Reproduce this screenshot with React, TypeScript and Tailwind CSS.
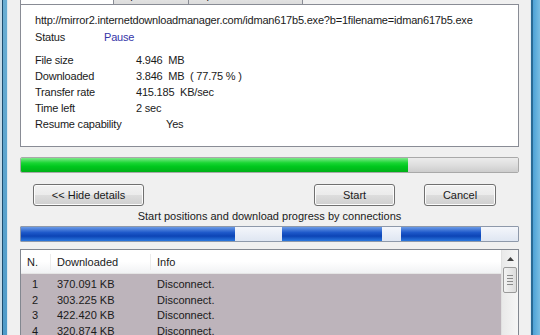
import React from 'react';

const rows = [
  { n: '1', size: '370.091 KB', info: 'Disconnect.' },
  { n: '2', size: '303.225 KB', info: 'Disconnect.' },
  { n: '3', size: '422.420 KB', info: 'Disconnect.' },
  { n: '4', size: '320.874 KB', info: 'Disconnect.' },
];

const details = [
  { label: 'File size', value: '4.946  MB' },
  { label: 'Downloaded', value: '3.846  MB  ( 77.75 % )' },
  { label: 'Transfer rate', value: '415.185  KB/sec' },
  { label: 'Time left', value: '2 sec' },
];

const VistaButton: React.FC<{ label: string; width: string }> = ({ label, width }) => (
  <button
    className={`${width} h-[22px] rounded-[3px] border border-[#707070] bg-[linear-gradient(#f2f2f2_0%,#ebebeb_50%,#dddddd_51%,#cfcfcf_100%)] text-[11px] text-[#1a1a1a] shadow-[inset_0_0_0_1px_#fcfcfc]`}
  >
    {label}
  </button>
);

export default function App() {
  return (
    <div
      className="w-[540px] h-[335px] overflow-hidden flex bg-[#f0f0f0] text-[#1a1a1a]"
      style={{ fontFamily: '"Liberation Sans", Arial, sans-serif' }}
    >
      {/* Left glass frame */}
      <div className="flex h-full shrink-0">
        <div className="w-[2px] bg-[#c6dbe8]" />
        <div className="w-[1px] bg-[#1d4e70]" />
        <div className="w-[4px] bg-[linear-gradient(#6aaed3,#4f9bc9)]" />
        <div className="w-[1px] bg-[#dbe8f0]" />
      </div>

      {/* Dialog content */}
      <div className="flex-1 flex flex-col pl-[12px] pr-[11px]">
        {/* Tabs strip, clipped by the top edge */}
        <div className="shrink-0 h-[4px] overflow-hidden flex items-end">
          <div className="w-[94px] h-[16px] border-x border-[#898c95] bg-white text-[11px] leading-[14px] pl-[8px] text-[#555]">
            Download status
          </div>
          <div className="w-[75px] h-[16px] border-r border-[#898c95] bg-[linear-gradient(#f2f2f2,#dcdcdc)] text-[11px] leading-[14px] pl-[9px]">
            Speed Limiter
          </div>
          <div className="w-[114px] h-[16px] border-r border-[#898c95] bg-[linear-gradient(#f2f2f2,#dcdcdc)] text-[11px] leading-[14px] pl-[9px]">
            Options on completion
          </div>
        </div>

        {/* Tab panel */}
        <div className="shrink-0 h-[143px] border border-[#898c95] bg-white pl-[14px] pt-[7px] text-[11px] tracking-[-0.2px]">
          <div className="h-[16px] leading-[16px]">
            http://mirror2.internetdownloadmanager.com/idman617b5.exe?b=1filename=idman617b5.exe
          </div>
          <div className="h-[16px] leading-[16px] mt-[1px] flex">
            <span className="w-[69px]">Status</span>
            <span className="text-[#3535a8]">Pause</span>
          </div>
          <div className="mt-[7px]">
            {details.map((d) => (
              <div key={d.label} className="h-[16px] leading-[16px] flex">
                <span className="w-[101px]">{d.label}</span>
                <span className="whitespace-pre">{d.value}</span>
              </div>
            ))}
            <div className="h-[16px] leading-[16px] flex">
              <span className="w-[131px]">Resume capability</span>
              <span>Yes</span>
            </div>
          </div>
        </div>

        {/* Overall progress */}
        <div className="shrink-0 mt-[10px] h-[16px] flex rounded-[2px] border border-[#a9a9a9] overflow-hidden">
          <div className="w-[387px] bg-[linear-gradient(#7ee88a_0%,#19d633_35%,#00c81e_60%,#00b018_100%)]" />
          <div className="flex-1 bg-[linear-gradient(#ececec_0%,#dedede_50%,#cdcdcd_100%)]" />
        </div>

        {/* Buttons */}
        <div className="shrink-0 mt-[9px] flex items-center">
          <div className="ml-[13px]">
            <VistaButton label="<< Hide details" width="w-[111px]" />
          </div>
          <div className="ml-[170px]">
            <VistaButton label="Start" width="w-[81px]" />
          </div>
          <div className="ml-[29px]">
            <VistaButton label="Cancel" width="w-[72px]" />
          </div>
        </div>

        <div className="shrink-0 mt-[2px] h-[16px] leading-[16px] text-[11px] text-center">
          Start positions and download progress by connections
        </div>

        {/* Connections bar */}
        <div className="shrink-0 mt-[2px] h-[16px] flex border border-[#8e99aa] rounded-[1px] overflow-hidden">
          <div className="w-[214px] bg-[linear-gradient(#6a9ae6_0%,#1d58c9_40%,#0c44b5_65%,#2b78de_100%)]" />
          <div className="w-[47px] bg-[linear-gradient(#f4f6fb,#dfe6f2)]" />
          <div className="w-[100px] bg-[linear-gradient(#6a9ae6_0%,#1d58c9_40%,#0c44b5_65%,#2b78de_100%)]" />
          <div className="w-[19px] bg-[linear-gradient(#f4f6fb,#dfe6f2)]" />
          <div className="w-[80px] bg-[linear-gradient(#6a9ae6_0%,#1d58c9_40%,#0c44b5_65%,#2b78de_100%)]" />
          <div className="flex-1 bg-[linear-gradient(#f4f6fb,#dfe6f2)]" />
        </div>

        {/* Connections list */}
        <div className="mt-[7px] flex-1 min-h-0 flex border border-[#828790] border-b-0 bg-white">
          <div className="flex-1 flex flex-col">
            <div className="shrink-0 h-[24px] flex items-center text-[11px] bg-[linear-gradient(#ffffff_0%,#ffffff_50%,#f1f2f4_100%)] border-b border-[#e5e5e5]">
              <span className="w-[30px] pl-[6px] border-r border-[#ececec]">N.</span>
              <span className="w-[100px] pl-[6px] border-r border-[#ececec]">Downloaded</span>
              <span className="pl-[6px]">Info</span>
            </div>
            <div className="flex-1 bg-[#bdb4bb] pt-[3px] text-[11px]">
              {rows.map((r) => (
                <div key={r.n} className="h-[15.5px] leading-[15.5px] flex">
                  <span className="w-[30px] pl-[11px]">{r.n}</span>
                  <span className="w-[100px] pl-[6px]">{r.size}</span>
                  <span className="pl-[6px]">{r.info}</span>
                </div>
              ))}
            </div>
          </div>
          {/* Scrollbar */}
          <div className="w-[17px] flex flex-col items-center bg-[linear-gradient(90deg,#e9e9e9,#f6f6f6)] border-l border-[#e0e0e0]">
            <svg width="7" height="4" viewBox="0 0 7 4" className="mt-[7px]">
              <path d="M0 4 L3.5 0 L7 4 Z" fill="#404040" />
            </svg>
            <div className="mt-[6px] w-[14px] h-[26px] rounded-[2px] border border-[#9a9a9a] bg-[linear-gradient(90deg,#f3f3f3,#dcdcdc)] flex flex-col items-center justify-center gap-[2px]">
              <div className="w-[6px] h-[1px] bg-[#8a8a8a]" />
              <div className="w-[6px] h-[1px] bg-[#8a8a8a]" />
              <div className="w-[6px] h-[1px] bg-[#8a8a8a]" />
              <div className="w-[6px] h-[1px] bg-[#8a8a8a]" />
            </div>
          </div>
        </div>
      </div>

      {/* Right glass frame */}
      <div className="flex h-full shrink-0">
        <div className="w-[1px] bg-[#dbe8f0]" />
        <div className="w-[2px] bg-[#2a6b96]" />
        <div className="w-[7px] bg-[linear-gradient(90deg,#4da2d6,#79bde2)]" />
      </div>
    </div>
  );
}
